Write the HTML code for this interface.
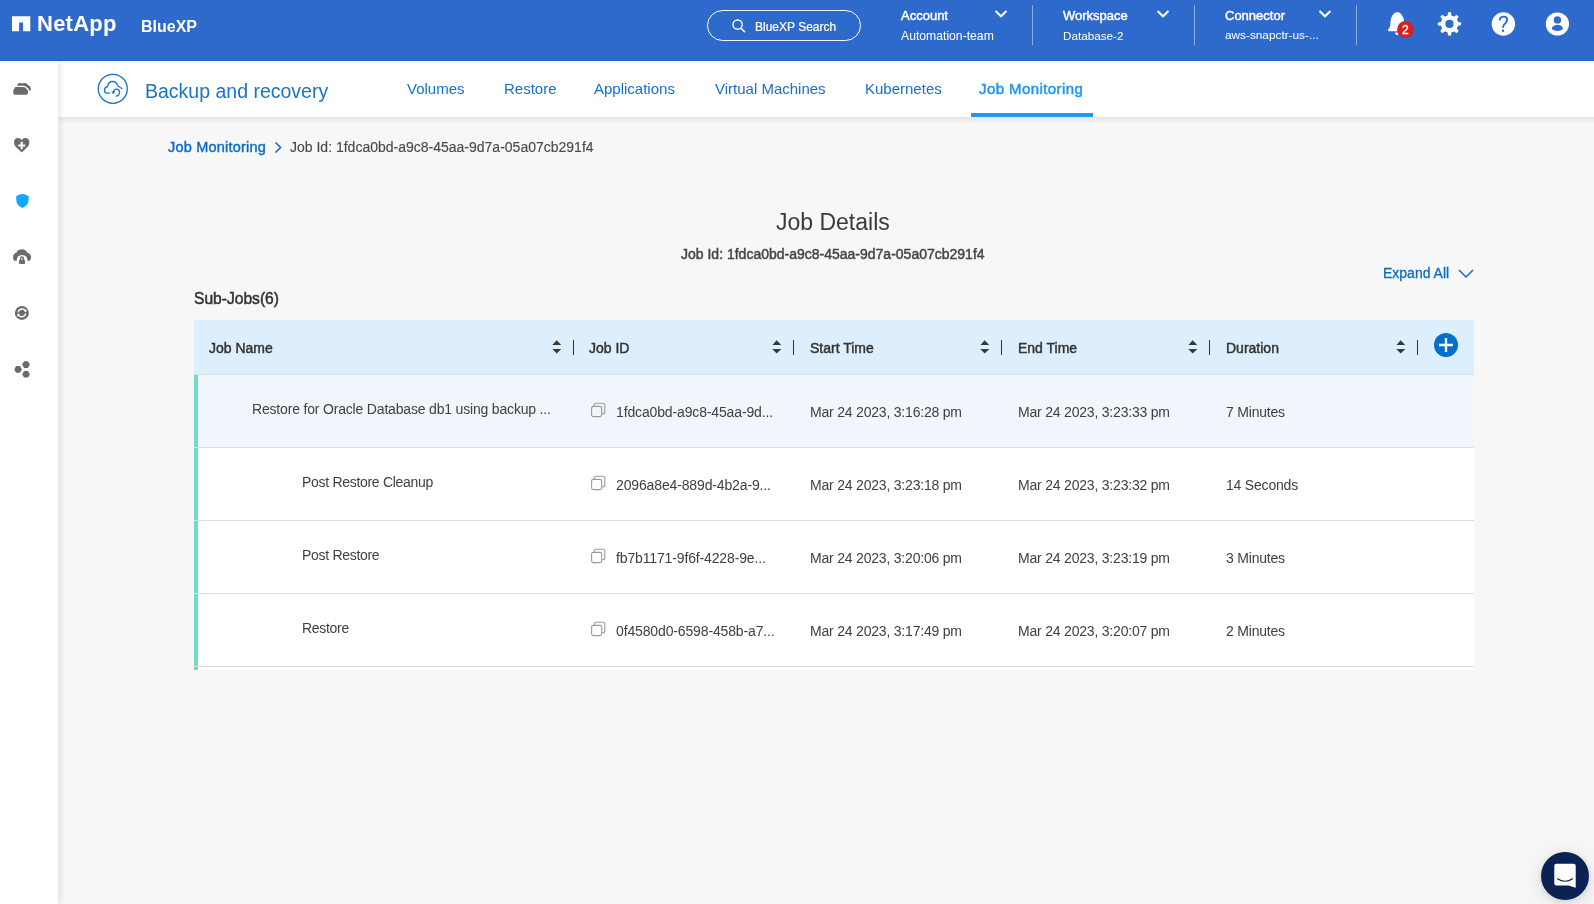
<!DOCTYPE html>
<html><head><meta charset="utf-8">
<style>
*{box-sizing:border-box;margin:0;padding:0}
html,body{width:1594px;height:904px;overflow:hidden;background:#f7f7f7;font-family:"Liberation Sans",sans-serif;position:relative}
.t{position:absolute;white-space:nowrap;line-height:1;will-change:transform}
svg{position:absolute;overflow:visible}
#hdr{position:absolute;left:0;top:0;width:1594px;height:61px;background:#2d6acc;border-bottom:1px solid #2262c9;z-index:5}
#side{position:absolute;left:0;top:61px;width:58px;height:843px;background:#fff;box-shadow:2px 0 7px rgba(0,0,0,.10);z-index:2}
#sub{position:absolute;left:58px;top:61px;width:1560px;height:56px;background:#fff;box-shadow:0 2px 7px rgba(0,0,0,.10);z-index:1}
.w{color:#fff}
.tab{color:#1470cc;font-size:15px}
.sep{position:absolute;top:5px;width:1px;height:40px;background:rgba(255,255,255,.45)}
#tbl{position:absolute;left:194px;top:320px;width:1280px;height:350px}
.hrow{position:absolute;left:0;top:0;width:1280px;height:55px;background:#ddeffd;border-bottom:1px solid #dcdcdc}
.row{position:absolute;left:0;width:1280px;height:73px;background:#fff;border-bottom:1px solid #dedede}
.bar{position:absolute;left:0;top:0;width:4px;height:100%;background:#72dbc6}
.ht{font-size:14px;font-weight:400;color:#333;-webkit-text-stroke:.45px #333}
.ct{font-size:14px;color:#404040;letter-spacing:-.2px}
.csep{position:absolute;top:20px;width:1px;height:15px;background:#333}
</style></head><body>

<!-- HEADER -->
<div id="hdr">
  <svg style="left:0;top:0" width="40" height="40"><path d="M12 16.3H30.3V31.3H23.1V22.5H19.1V31.3H12Z" fill="#fff"/></svg>
  <div class="t w" style="left:37px;top:13px;font-size:22px;font-weight:700;letter-spacing:.25px">NetApp</div>
  <div class="t w" style="left:141px;top:18.5px;font-size:16px;font-weight:700">BlueXP</div>

  <div style="position:absolute;left:707px;top:10px;width:154px;height:31px;border:1px solid #fff;border-radius:16px"></div>
  <svg style="left:0;top:0" width="1" height="1"><circle cx="737.6" cy="24.6" r="4.6" fill="none" stroke="#fff" stroke-width="1.4"/><path d="M741 28.2L744.4 31.6" stroke="#fff" stroke-width="1.6" stroke-linecap="round"/></svg>
  <div class="t w" style="left:755px;top:20.5px;font-size:12px;-webkit-text-stroke:.2px #fff">BlueXP Search</div>

  <div class="t w" style="left:901px;top:9px;font-size:13px;-webkit-text-stroke:.45px #fff">Account</div>
  <div class="t w" style="left:901px;top:29.5px;font-size:12.2px">Automation-team</div>
  <svg style="left:0;top:0" width="1" height="1"><path d="M995.5 11L1001 16.3L1006.5 11" fill="none" stroke="#fff" stroke-width="2"/></svg>
  <div class="sep" style="left:1032px"></div>

  <div class="t w" style="left:1063px;top:9px;font-size:13px;-webkit-text-stroke:.45px #fff">Workspace</div>
  <div class="t w" style="left:1063px;top:29.5px;font-size:11.7px">Database-2</div>
  <svg style="left:0;top:0" width="1" height="1"><path d="M1157.5 11L1163 16.3L1168.5 11" fill="none" stroke="#fff" stroke-width="2"/></svg>
  <div class="sep" style="left:1194px"></div>

  <div class="t w" style="left:1225px;top:9px;font-size:13px;-webkit-text-stroke:.45px #fff">Connector</div>
  <div class="t w" style="left:1225px;top:29.5px;font-size:11.8px">aws-snapctr-us-...</div>
  <svg style="left:0;top:0" width="1" height="1"><path d="M1319.5 11L1325 16.3L1330.5 11" fill="none" stroke="#fff" stroke-width="2"/></svg>
  <div class="sep" style="left:1356px"></div>

  <svg style="left:0;top:0" width="1" height="1">
    <path d="M1397.3 12.1Q1394 12.4 1392.4 15.5Q1390.7 18 1390.5 21.5L1390.3 25.5Q1390 27.8 1388.1 29.3Q1387.5 31.2 1389.2 31.3H1405.4Q1407.1 31.2 1406.5 29.3Q1404.6 27.8 1404.3 25.5L1404.1 21.5Q1403.9 18 1402.2 15.5Q1400.6 12.4 1397.3 12.1Z" fill="#fff"/>
    <path d="M1395 32.4Q1395.3 35.1 1397 35.1Q1398.7 35.1 1399 32.4Z" fill="#fff"/>
    <circle cx="1405.5" cy="29.5" r="8.4" fill="#d91e24"/>
    <text x="1405.4" y="34" text-anchor="middle" font-family="Liberation Sans" font-size="12" fill="#fff" stroke="#fff" stroke-width=".4">2</text>
  </svg>
  <svg style="left:0;top:0" width="1" height="1">
    <g transform="translate(1449.5 23.9)" fill="#fff"><circle r="8.7"/><path d="M-1.45 -11.6H1.45L2.2 -7H-2.2Z" transform="rotate(0)"/><path d="M-1.45 -11.6H1.45L2.2 -7H-2.2Z" transform="rotate(45)"/><path d="M-1.45 -11.6H1.45L2.2 -7H-2.2Z" transform="rotate(90)"/><path d="M-1.45 -11.6H1.45L2.2 -7H-2.2Z" transform="rotate(135)"/><path d="M-1.45 -11.6H1.45L2.2 -7H-2.2Z" transform="rotate(180)"/><path d="M-1.45 -11.6H1.45L2.2 -7H-2.2Z" transform="rotate(225)"/><path d="M-1.45 -11.6H1.45L2.2 -7H-2.2Z" transform="rotate(270)"/><path d="M-1.45 -11.6H1.45L2.2 -7H-2.2Z" transform="rotate(315)"/><circle r="4.1" fill="#2d6acc"/></g>
  </svg>
  <svg style="left:0;top:0" width="1" height="1">
    <circle cx="1503.4" cy="24" r="11.7" fill="#fff"/>
    <path d="M1499.7 19.6Q1500.3 16.6 1503.5 16.6Q1507.2 16.6 1507.2 19.6Q1507.2 21.6 1505.2 23.4Q1503.4 25 1503 27" fill="none" stroke="#2d6acc" stroke-width="1.9" stroke-linecap="round"/>
    <circle cx="1503" cy="30.8" r="1.2" fill="#2d6acc"/>
  </svg>
  <svg style="left:0;top:0" width="1" height="1">
    <circle cx="1557.4" cy="24" r="11.6" fill="#fff"/>
    <circle cx="1557.4" cy="19.9" r="3.7" fill="#2d6acc"/>
    <path d="M1551.9 29.3Q1551.6 25.3 1557.4 24.8Q1563.2 25.3 1562.9 29.3Q1560.6 31.1 1557.4 31.1Q1554.2 31.1 1551.9 29.3Z" fill="#2d6acc"/>
  </svg>
</div>

<!-- SIDEBAR -->

<div id="side">
  <svg style="left:0;top:-61px" width="1" height="1" fill="#6b6b6b">
    <!-- clouds -->
    <path d="M17.1 85.7Q17.1 83.2 19.6 83.1Q21 82.9 22 83.6Q23.3 82.9 24.8 83.1Q27 83.3 28 85.1Q30.9 86.3 30.9 89.3Q30.9 90.8 29.4 91Q29.2 89 27.8 88.2Q26.5 85.8 23.5 85.7Z"/>
    <path d="M15.5 87.1H19.3Q19.9 86.8 20.5 87.1H23.3Q25.8 87.1 26.8 89.3Q28.3 90.2 28.2 92.3Q28 94.8 25.8 94.8H15.2Q13.1 94.8 13.1 92.4Q13.1 90 14.3 88.6Q14.8 87.1 15.5 87.1Z"/>
    <!-- heart plus -->
    <path d="M21.7 152.6L15.7 146.7Q13.9 144.7 14 142Q14.3 138 18.1 137.9Q20.5 137.9 21.7 140Q22.9 137.9 25.3 137.9Q29.1 138 29.4 142Q29.5 144.7 27.7 146.7Z"/>
    <path d="M21.7 141.8V149.3M18.2 145.5H25.2" stroke="#fff" stroke-width="2.1"/>
    <!-- shield -->
    <path d="M16.1 196.4Q19.2 194.1 22.4 194.1Q25.6 194.1 28.9 196.4L28.3 202.5Q27 205.8 22.4 207.9Q17.8 205.8 16.6 202.5Z" fill="#10a9ff"/>
    <!-- cloud lock -->
    <path d="M13 257.5Q13 253.6 16.4 252.5Q18.1 249.3 22 249.3Q25.4 249.3 27.1 252.2Q31 253.3 31 257.2Q31 260.5 28 261H27.6Q27.6 254.9 22.1 254.9Q16.6 254.9 16.6 261H16Q13 260.7 13 257.5Z"/>
    <path d="M20.6 260V258.6Q20.6 257 22 257Q23.4 257 23.4 258.6V260" fill="none" stroke="#6b6b6b" stroke-width="1.4"/>
    <rect x="19.1" y="259.8" width="5.9" height="4.3" rx="0.8"/>
    <!-- sync -->
    <circle cx="21.9" cy="312.9" r="7"/>
    <path d="M18.1 312.3Q18.9 309 22.1 309Q24.3 309 25.6 310.6M25.7 313.5Q24.9 316.8 21.7 316.8Q19.5 316.8 18.2 315.2" fill="none" stroke="#fff" stroke-width="1.3"/>
    <path d="M26.7 309.2L26.2 312.2L23.6 311Z M17.1 316.6L17.6 313.6L20.2 314.8Z" fill="#fff"/>
    <!-- hexes -->
    <path d="M14.2 369.4L16.15 366.1H20L21.95 369.4L20 372.7H16.15Z"/>
    <path d="M22.1 364.6L24.05 361.3H27.95L29.9 364.6L27.95 367.9H24.05Z"/>
    <path d="M22.1 374.2L24.05 370.9H27.95L29.9 374.2L27.95 377.5H24.05Z"/>
  </svg>
</div>

<!-- SUBHEADER -->
<div id="sub">
  <svg style="left:0;top:0" width="1" height="1"><g fill="none" stroke="#1a73c6" stroke-width="1.3" stroke-linecap="round">
    <circle cx="54.8" cy="27.8" r="14.5"/>
    <path d="M51.5 32.2H49.3Q46.5 32.2 46.5 29Q46.5 26.2 49.5 25.6Q50.3 20.5 54.5 20.5Q58.3 20.5 59.5 24.3Q60.2 25.6 63.8 27.5"/>
    <path d="M55.6 30.6Q56.3 28.2 58.7 28.2Q61.2 28.2 61.5 31Q61.5 34.5 58.3 35.2"/>
  </g><path d="M53.2 30.4H57.2L55.3 33.3Z" fill="#1a73c6"/></svg>
  <div class="t" style="left:86.5px;top:21px;font-size:19.5px;color:#1a73c6">Backup and recovery</div>
  <div class="t tab" style="left:349px;top:20px">Volumes</div>
  <div class="t tab" style="left:445.5px;top:20px">Restore</div>
  <div class="t tab" style="left:535.5px;top:20px">Applications</div>
  <div class="t tab" style="left:657px;top:20px">Virtual Machines</div>
  <div class="t tab" style="left:806.5px;top:20px">Kubernetes</div>
  <div class="t tab" style="left:921px;top:20px;color:#2196f3;letter-spacing:.42px;-webkit-text-stroke:.5px #2196f3">Job Monitoring</div>
  <div style="position:absolute;left:913px;top:52px;width:122px;height:4px;background:#2196f3"></div>
</div>

<!-- BREADCRUMB -->
<div class="t" style="left:168px;top:139.5px;font-size:14.5px;color:#0a6acb;letter-spacing:.2px;-webkit-text-stroke:.4px #0a6acb">Job Monitoring</div>
<svg style="left:0;top:0" width="1" height="1"><path d="M275.5 142.5L280.5 147.5L275.5 152.5" fill="none" stroke="#0a6acb" stroke-width="1.5"/></svg>
<div class="t" style="left:290px;top:140px;font-size:14px;color:#4a4a4a;-webkit-text-stroke:.15px #4a4a4a">Job Id: 1fdca0bd-a9c8-45aa-9d7a-05a07cb291f4</div>

<div class="t" style="left:776px;top:210.5px;font-size:23px;color:#3a3a3a">Job Details</div>
<div class="t" style="left:681px;top:247px;font-size:14px;color:#444;-webkit-text-stroke:.45px #444">Job Id: 1fdca0bd-a9c8-45aa-9d7a-05a07cb291f4</div>

<div class="t" style="left:1383px;top:266px;font-size:14px;color:#0a6acb;-webkit-text-stroke:.3px #0a6acb">Expand All</div>
<svg style="left:0;top:0" width="1" height="1"><path d="M1459 270L1466 277L1473 270" fill="none" stroke="#0a6acb" stroke-width="1.5"/></svg>

<div class="t" style="left:194px;top:290.7px;font-size:15.6px;color:#333;-webkit-text-stroke:.5px #333">Sub-Jobs(6)</div>

<!-- TABLE -->
<div id="tbl">
<div class="hrow">
<div class="t ht" style="left:15.3px;top:21px">Job Name</div>
<svg style="left:0;top:0" width="1" height="1"><path d="M358.3 25L362.65 20.3L367.30 25Z M358.3 29L362.65 33.5L367.30 29Z" fill="#3a3a3a"/></svg>
<div class="csep" style="left:379px"></div>
<div class="t ht" style="left:395.3px;top:21px">Job ID</div>
<svg style="left:0;top:0" width="1" height="1"><path d="M578.3 25L582.65 20.3L587.30 25Z M578.3 29L582.65 33.5L587.30 29Z" fill="#3a3a3a"/></svg>
<div class="csep" style="left:599px"></div>
<div class="t ht" style="left:615.9px;top:21px">Start Time</div>
<svg style="left:0;top:0" width="1" height="1"><path d="M786.3 25L790.65 20.3L795.30 25Z M786.3 29L790.65 33.5L795.30 29Z" fill="#3a3a3a"/></svg>
<div class="csep" style="left:807px"></div>
<div class="t ht" style="left:824px;top:21px">End Time</div>
<svg style="left:0;top:0" width="1" height="1"><path d="M994.3 25L998.65 20.3L1003.30 25Z M994.3 29L998.65 33.5L1003.30 29Z" fill="#3a3a3a"/></svg>
<div class="csep" style="left:1015px"></div>
<div class="t ht" style="left:1031.9px;top:21px">Duration</div>
<svg style="left:0;top:0" width="1" height="1"><path d="M1202.3 25L1206.65 20.3L1211.30 25Z M1202.3 29L1206.65 33.5L1211.30 29Z" fill="#3a3a3a"/></svg>
<div class="csep" style="left:1223px"></div>
<svg style="left:0;top:0" width="1" height="1"><circle cx="1252" cy="25" r="12" fill="#0070cc"/><path d="M1245 25H1259M1252 18V32" stroke="#fff" stroke-width="2.3"/></svg>
</div>
<div class="row" style="top:55px;background:#f1f6fd"><div class="bar"></div>
<div class="t ct" style="left:57.5px;top:26.9px;letter-spacing:-.18px">Restore for Oracle Database db1 using backup ...</div>
<svg style="left:0;top:0" width="1" height="1"><path d="M400.3 31.2V30.2Q400.3 28.2 402.3 28.2H408.8Q410.8 28.2 410.8 30.2V36.7Q410.8 38.7 408.8 38.7H407.7" fill="none" stroke="#9a9a9a" stroke-width="1.1"/><rect x="397.6" y="31.4" width="10.1" height="10.2" rx="1.8" fill="none" stroke="#9a9a9a" stroke-width="1.1"/></svg>
<div class="t ct" style="left:422px;top:30.15px;letter-spacing:-.14px">1fdca0bd-a9c8-45aa-9d...</div>
<div class="t ct" style="left:615.9px;top:30.15px">Mar 24 2023, 3:16:28 pm</div>
<div class="t ct" style="left:824px;top:30.15px">Mar 24 2023, 3:23:33 pm</div>
<div class="t ct" style="left:1031.9px;top:30.15px">7 Minutes</div>
</div>
<div class="row" style="top:128px;background:#fff"><div class="bar"></div>
<div class="t ct" style="left:108px;top:26.9px;letter-spacing:-.3px">Post Restore Cleanup</div>
<svg style="left:0;top:0" width="1" height="1"><path d="M400.3 31.2V30.2Q400.3 28.2 402.3 28.2H408.8Q410.8 28.2 410.8 30.2V36.7Q410.8 38.7 408.8 38.7H407.7" fill="none" stroke="#9a9a9a" stroke-width="1.1"/><rect x="397.6" y="31.4" width="10.1" height="10.2" rx="1.8" fill="none" stroke="#9a9a9a" stroke-width="1.1"/></svg>
<div class="t ct" style="left:422px;top:30.15px;letter-spacing:-.14px">2096a8e4-889d-4b2a-9...</div>
<div class="t ct" style="left:615.9px;top:30.15px">Mar 24 2023, 3:23:18 pm</div>
<div class="t ct" style="left:824px;top:30.15px">Mar 24 2023, 3:23:32 pm</div>
<div class="t ct" style="left:1031.9px;top:30.15px">14 Seconds</div>
</div>
<div class="row" style="top:201px;background:#fff"><div class="bar"></div>
<div class="t ct" style="left:108px;top:26.9px;letter-spacing:-.3px">Post Restore</div>
<svg style="left:0;top:0" width="1" height="1"><path d="M400.3 31.2V30.2Q400.3 28.2 402.3 28.2H408.8Q410.8 28.2 410.8 30.2V36.7Q410.8 38.7 408.8 38.7H407.7" fill="none" stroke="#9a9a9a" stroke-width="1.1"/><rect x="397.6" y="31.4" width="10.1" height="10.2" rx="1.8" fill="none" stroke="#9a9a9a" stroke-width="1.1"/></svg>
<div class="t ct" style="left:422px;top:30.15px;letter-spacing:-.14px">fb7b1171-9f6f-4228-9e...</div>
<div class="t ct" style="left:615.9px;top:30.15px">Mar 24 2023, 3:20:06 pm</div>
<div class="t ct" style="left:824px;top:30.15px">Mar 24 2023, 3:23:19 pm</div>
<div class="t ct" style="left:1031.9px;top:30.15px">3 Minutes</div>
</div>
<div class="row" style="top:274px;background:#fff"><div class="bar"></div>
<div class="t ct" style="left:108px;top:26.9px;letter-spacing:-.3px">Restore</div>
<svg style="left:0;top:0" width="1" height="1"><path d="M400.3 31.2V30.2Q400.3 28.2 402.3 28.2H408.8Q410.8 28.2 410.8 30.2V36.7Q410.8 38.7 408.8 38.7H407.7" fill="none" stroke="#9a9a9a" stroke-width="1.1"/><rect x="397.6" y="31.4" width="10.1" height="10.2" rx="1.8" fill="none" stroke="#9a9a9a" stroke-width="1.1"/></svg>
<div class="t ct" style="left:422px;top:30.15px;letter-spacing:-.14px">0f4580d0-6598-458b-a7...</div>
<div class="t ct" style="left:615.9px;top:30.15px">Mar 24 2023, 3:17:49 pm</div>
<div class="t ct" style="left:824px;top:30.15px">Mar 24 2023, 3:20:07 pm</div>
<div class="t ct" style="left:1031.9px;top:30.15px">2 Minutes</div>
</div>
<div class="row" style="top:347px;height:3px;border:0;background:#fff"><div class="bar"></div></div>
</div>


<div style="position:absolute;left:1541px;top:852px;width:48px;height:48px;border-radius:50%;background:#0b2352;box-shadow:0 2px 6px rgba(0,0,0,.10),0 4px 24px rgba(0,0,0,.10)"></div>
<svg style="left:0;top:0" width="1" height="1">
  <path d="M1556.3 863.7H1573.7Q1575.7 863.7 1575.7 865.7V887.8L1568.5 885.6H1556.3Q1554.3 885.6 1554.3 883.6V865.7Q1554.3 863.7 1556.3 863.7Z" fill="#fff"/>
  <path d="M1557.4 878.8Q1565 883.8 1572.6 878.8" fill="none" stroke="#0b2352" stroke-width="1.1" stroke-linecap="round"/>
</svg>
</body></html>
